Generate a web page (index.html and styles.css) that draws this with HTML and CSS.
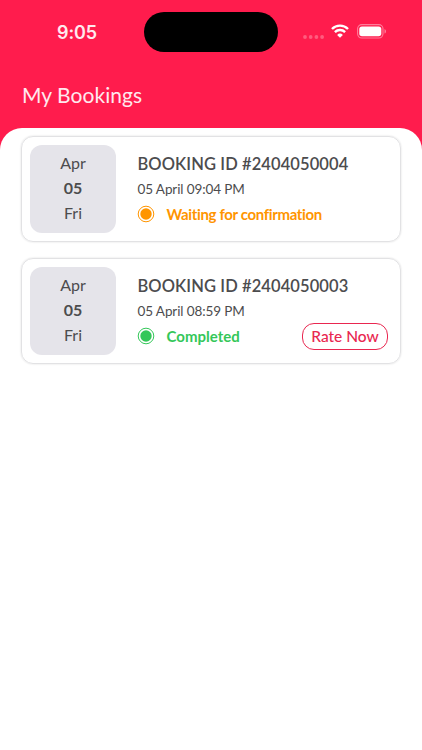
FILE: index.html
```html
<!DOCTYPE html>
<html lang="en">
<head>
<meta charset="UTF-8">
<meta name="viewport" content="width=device-width, initial-scale=1.0">
<title>My Bookings</title>
<link rel="stylesheet" href="styles.css">
</head>
<body>
<header class="header">
<div class="status-bar">
<span class="time">9:05</span>
<span class="island"></span>
<div class="status-icons">
<svg class="signal" width="22" height="4" viewBox="0 0 22 4"><circle cx="2" cy="2" r="1.9"/><circle cx="7.7" cy="2" r="1.9"/><circle cx="13.4" cy="2" r="1.9"/><circle cx="19.1" cy="2" r="1.9"/></svg>
<svg class="wifi" width="18" height="14" viewBox="0 0 18 14"><path d="M1 5a11.2 11.2 0 0 1 16 0M3.9 8.1a7.2 7.2 0 0 1 10.2 0" fill="none" stroke="#fff" stroke-width="2.4"/><path d="M9 13.8l-2.9-2.9a4.1 4.1 0 0 1 5.8 0z" fill="#fff"/></svg>
<svg class="battery" width="30" height="15" viewBox="0 0 30 15"><rect x=".6" y=".6" width="25.4" height="13.4" rx="4.2" fill="none" stroke="#ff7d9a" stroke-width="1.1"/><rect x="2.3" y="2.4" width="22" height="9.8" rx="2.7" fill="#fff"/><path d="M27.5 5v4.6c2-.8 2-3.8 0-4.6z" fill="#ff7d9a"/></svg>
</div>
</div>
<h1>My Bookings</h1>
</header>
<main class="sheet">
<div class="card">
<div class="date"><span>Apr</span><b>05</b><span>Fri</span></div>
<div class="details">
<h2>BOOKING ID #2404050004</h2>
<p class="datetime">05 April 09:04 PM</p>
<div class="status waiting">
<svg width="18" height="18" viewBox="0 0 18 18"><circle cx="9" cy="9" r="7.8" fill="none" stroke="currentColor" stroke-width="1"/><circle cx="9" cy="9" r="5.7" fill="currentColor"/></svg>
<span>Waiting for confirmation</span>
</div>
</div>
</div>
<div class="card">
<div class="date"><span>Apr</span><b>05</b><span>Fri</span></div>
<div class="details">
<h2>BOOKING ID #2404050003</h2>
<p class="datetime">05 April 08:59 PM</p>
<div class="status completed">
<svg width="18" height="18" viewBox="0 0 18 18"><circle cx="9" cy="9" r="7.8" fill="none" stroke="currentColor" stroke-width="1"/><circle cx="9" cy="9" r="5.7" fill="currentColor"/></svg>
<span>Completed</span>
<button class="rate">Rate Now</button>
</div>
</div>
</div>
</main>
</body>
</html>
```
FILE: styles.css
```css
* { box-sizing: border-box; }
body { margin: 0; min-height: 100vh; display: flex; flex-direction: column; background: linear-gradient(#ff1c4d 200px, #fff 200px); font-family: Lato, "Liberation Sans", sans-serif; color: #4c4c4e; }
h1, h2, p { margin: 0; }
.header { height: 128px; color: #ffe9ee; }
.status-bar { height: 64px; display: grid; grid-template-columns: 144px 134px 144px; align-items: center; }
.time { font-family: Inter, sans-serif; font-size: 18px; font-weight: 600; padding-left: 57px; letter-spacing: -0.1px; }
.island { height: 40px; border-radius: 20px; background-color: #000; }
.status-icons { display: flex; align-items: center; padding-left: 25px; }
.signal { fill: #ff5c7e; margin-top: 9px; }
.wifi { margin-left: 6px; margin-top: -2px; }
.battery { margin-left: 8px; margin-top: -1px; }
h1 { padding-left: 22px; font-size: 21px; font-weight: 400; line-height: 62px; letter-spacing: 0.05px; }
.sheet { flex: 1; display: flex; flex-direction: column; gap: 16px; padding: 8px 21px; background-color: #fff; border-radius: 22px 22px 0 0; }
.card { height: 106px; display: flex; gap: 21px; padding: 8px; border: 1px solid #e2e2e4; border-radius: 12px; box-shadow: 0 0 2px rgba(0, 0, 0, 0.15); }
.date { width: 86px; height: 88px; display: flex; flex-direction: column; align-items: center; justify-content: center; padding-bottom: 4px; background-color: #e5e4ea; border-radius: 12px; font-size: 16px; line-height: 25px; }
.details { flex: 1; padding-top: 6px; }
h2 { padding-left: 0.5px; font-size: 16.5px; font-weight: 600; line-height: 26px; letter-spacing: 0.1px; white-space: nowrap; }
.datetime { padding-left: 0.5px; font-size: 13.5px; line-height: 25px; letter-spacing: -0.1px; }
.status { display: flex; align-items: center; height: 24px; font-size: 15px; font-weight: 700; font-variant-ligatures: none; white-space: nowrap; }
.status svg { margin-left: -0.5px; margin-right: 12px; }
.waiting { color: #ff9500; letter-spacing: -0.35px; }
.completed { color: #34c759; }
.rate { margin-left: auto; margin-right: 4px; width: 86px; height: 27px; padding: 0; border: 1px solid #e92750; border-radius: 12px; background: none; color: #e92750; font: 500 15.5px Lato, sans-serif; }
```
